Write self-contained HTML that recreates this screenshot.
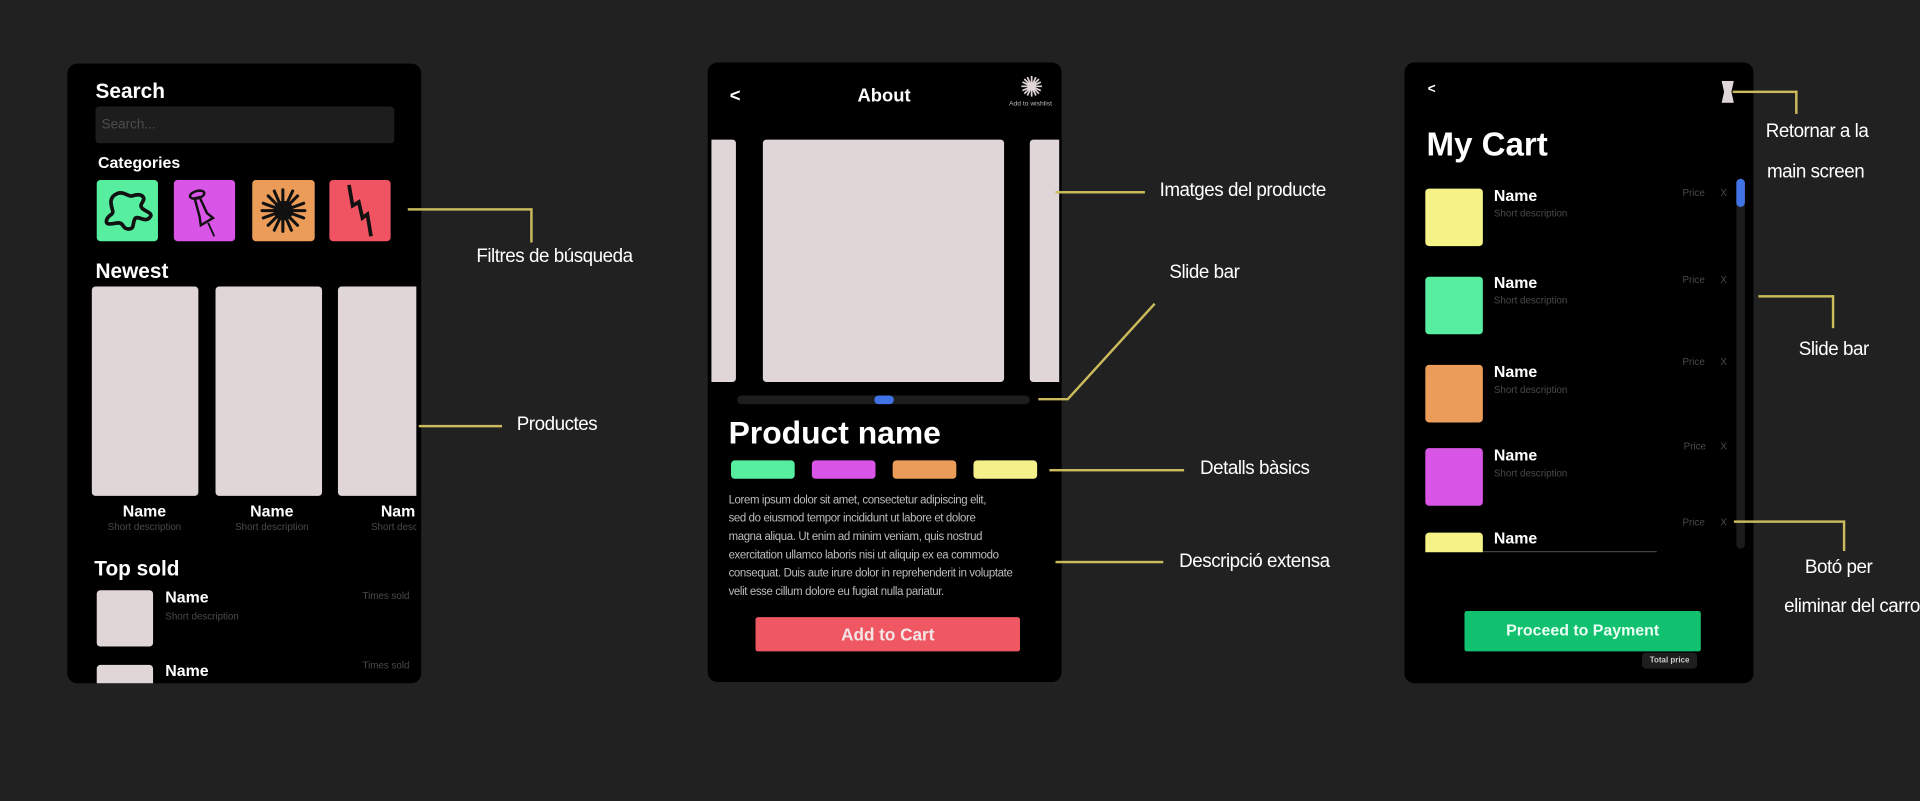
<!DOCTYPE html>
<html><head><meta charset="utf-8"><style>
html,body{margin:0;padding:0;background:#212121;width:1920px;height:800px;overflow:hidden}
#w{position:absolute;left:0;top:0;width:1568px;height:654px;transform:scale(1.22449);transform-origin:0 0;font-family:"Liberation Sans",Arial,sans-serif;color:#fff}
.a{position:absolute}
.ph{position:absolute;background:#000;border-radius:8px;overflow:hidden}
.b{font-weight:bold}
.g{color:#4a4a4a}
.card{background:#e0d6d7;border-radius:3px;position:absolute}
.ln{position:absolute;background:#cbbb5c}
.an{position:absolute;font-size:16px;letter-spacing:-0.4px;color:#fff;white-space:nowrap;transform:scaleX(0.96);transform-origin:0 0}
</style></head><body><div id="w">

<!-- Phone 1 -->
<div class="ph" style="left:55px;top:52px;width:289px;height:506px">
 <div class="a b" style="left:23px;top:13px;font-size:17px">Search</div>
 <div class="a" style="left:23px;top:35px;width:244px;height:30px;background:#1d1d1d;border-radius:3px"></div>
 <div class="a" style="left:28px;top:44px;font-size:11px;color:#4d4d4d">Search...</div>
 <div class="a b" style="left:25px;top:73px;font-size:13px">Categories</div>
 <div class="a" style="left:24px;top:95px;width:50px;height:50px;background:#57ee9f;border-radius:3px">
  <svg width="50" height="50" viewBox="0 0 50 50"><path d="M17 11c5-2 9 3 12 2s7-2 9 1-4 6-1 9 10 4 6 8-10-3-12 1 0 8-5 8-4-5-8-5-11 3-10-2 6-4 5-8-4-11 4-14z" fill="none" stroke="#111" stroke-width="3" stroke-linejoin="round"/></svg>
 </div>
 <div class="a" style="left:87px;top:95px;width:50px;height:50px;background:#d955e8;border-radius:3px">
  <svg width="50" height="50" viewBox="0 0 50 50"><ellipse cx="19" cy="12" rx="6" ry="3" fill="none" stroke="#111" stroke-width="2" transform="rotate(-15 19 12)"/><path d="M17 15l4-1 6 13 5 4-10 6-1-7z" fill="none" stroke="#111" stroke-width="2"/><path d="M28 35l5 11" stroke="#111" stroke-width="1.5"/></svg>
 </div>
 <div class="a" style="left:151px;top:95px;width:51px;height:50px;background:#eb9c59;border-radius:3px">
  <svg width="51" height="50" viewBox="0 0 51 50"><g stroke="#111" stroke-width="2.5" stroke-linecap="round"><path d="M25 8v34M8 25h35M13 13l24 24M37 13L13 37M18 9l14 32M33 9L18 41M9 19l33 12M9 31l33-12"/></g><circle cx="25.5" cy="25" r="8" fill="#111"/></svg>
 </div>
 <div class="a" style="left:214px;top:95px;width:50px;height:50px;background:#f05462;border-radius:3px">
  <svg width="50" height="50" viewBox="0 0 50 50"><path d="M16 4l3 17 5-3 3 13 4-3 3 18" fill="none" stroke="#111" stroke-width="3" stroke-linejoin="miter"/></svg>
 </div>
 <div class="a b" style="left:23px;top:160px;font-size:17px">Newest</div>
 <div class="card" style="left:20px;top:182px;width:87px;height:171px"></div>
 <div class="card" style="left:121px;top:182px;width:87px;height:171px"></div>
 <div class="card" style="left:221px;top:182px;width:64px;height:171px;border-radius:3px 0 0 3px"></div>
 <div class="a b" style="left:23px;top:358px;width:80px;text-align:center;font-size:13px">Name</div>
 <div class="a g" style="left:13px;top:374px;width:100px;text-align:center;font-size:8px">Short description</div>
 <div class="a b" style="left:127px;top:358px;width:80px;text-align:center;font-size:13px">Name</div>
 <div class="a g" style="left:117px;top:374px;width:100px;text-align:center;font-size:8px">Short description</div>
 <div class="a b" style="left:256px;top:358px;width:29px;overflow:hidden;font-size:13px">Nam</div>
 <div class="a g" style="left:248px;top:374px;font-size:8px;width:37px;overflow:hidden;white-space:nowrap">Short description</div>
 <div class="a b" style="left:22px;top:403px;font-size:17px">Top sold</div>
 <div class="card" style="left:24px;top:430px;width:46px;height:46px"></div>
 <div class="a b" style="left:80px;top:428px;font-size:13px">Name</div>
 <div class="a g" style="left:80px;top:447px;font-size:8px">Short description</div>
 <div class="a g" style="left:241px;top:430px;font-size:8px">Times sold</div>
 <div class="card" style="left:24px;top:491px;width:46px;height:30px"></div>
 <div class="a b" style="left:80px;top:488px;font-size:13px">Name</div>
 <div class="a g" style="left:241px;top:487px;font-size:8px">Times sold</div>
</div>

<!-- Phone 2 -->
<div class="ph" style="left:578px;top:51px;width:289px;height:506px">
 <div class="a b" style="left:18px;top:19px;font-size:15px">&lt;</div>
 <div class="a b" style="left:100px;top:19px;width:88px;text-align:center;font-size:15px">About</div>
 <svg class="a" style="left:256px;top:11px" width="17" height="17" viewBox="0 0 17 17"><g stroke="#e0d6d7" stroke-width="1.4"><path d="M8.5 0v17M0 8.5h17M2.5 2.5l12 12M14.5 2.5l-12 12M5 1l7 15M12 1L5 16M1 5l15 7M1 12l15-7"/></g><circle cx="8.5" cy="8.5" r="3" fill="#e0d6d7"/></svg>
 <div class="a" style="left:246px;top:31px;font-size:5.5px;color:#bbb">Add to wishlist</div>
 <div class="card" style="left:3px;top:63px;width:20px;height:198px;border-radius:0 3px 3px 0"></div>
 <div class="card" style="left:45px;top:63px;width:197px;height:198px"></div>
 <div class="card" style="left:263px;top:63px;width:24px;height:198px;border-radius:3px 0 0 3px"></div>
 <div class="a" style="left:24px;top:272px;width:239px;height:7px;background:#1d1d1d;border-radius:4px"></div>
 <div class="a" style="left:136px;top:272px;width:16px;height:7px;background:#3f73e6;border-radius:4px"></div>
 <div class="a b" style="left:17px;top:287px;font-size:26px">Product name</div>
 <div class="a" style="left:19px;top:325px;width:52px;height:15px;background:#57ee9f;border-radius:3px"></div>
 <div class="a" style="left:85px;top:325px;width:52px;height:15px;background:#d955e8;border-radius:3px"></div>
 <div class="a" style="left:151px;top:325px;width:52px;height:15px;background:#eb9c59;border-radius:3px"></div>
 <div class="a" style="left:217px;top:325px;width:52px;height:15px;background:#f5f08a;border-radius:3px"></div>
 <div class="a" style="left:17px;top:350px;width:290px;font-size:9.6px;letter-spacing:-0.3px;line-height:15px;color:#bdbdbd;transform:scaleX(0.97);transform-origin:0 0">Lorem ipsum dolor sit amet, consectetur adipiscing elit,<br>sed do eiusmod tempor incididunt ut labore et dolore<br>magna aliqua. Ut enim ad minim veniam, quis nostrud<br>exercitation ullamco laboris nisi ut aliquip ex ea commodo<br>consequat. Duis aute irure dolor in reprehenderit in voluptate<br>velit esse cillum dolore eu fugiat nulla pariatur.</div>
 <div class="a b" style="left:39px;top:453px;width:216px;height:28px;background:#ef5763;border-radius:2px;text-align:center;line-height:28px;font-size:14px;color:#f4e6e6">Add to Cart</div>
</div>

<!-- Phone 3 -->
<div class="ph" style="left:1147px;top:51px;width:285px;height:507px">
 <div class="a b" style="left:19px;top:16px;font-size:11px">&lt;</div>
 <svg class="a" style="left:259px;top:15px" width="10" height="18" viewBox="0 0 10 18"><path d="M0 0h10l-2 9 2 9H0l2-9z" fill="#e0d6d7"/></svg>
 <div class="a b" style="left:18px;top:52px;font-size:27px">My Cart</div>
 <div class="a" style="left:17px;top:103px;width:47px;height:47px;background:#f5f387;border-radius:3px"></div>
 <div class="a" style="left:17px;top:175px;width:47px;height:47px;background:#57ee9f;border-radius:3px"></div>
 <div class="a" style="left:17px;top:247px;width:47px;height:47px;background:#eb9c59;border-radius:3px"></div>
 <div class="a" style="left:17px;top:315px;width:47px;height:47px;background:#d955e8;border-radius:3px"></div>
 <div class="a" style="left:17px;top:384px;width:47px;height:16px;background:#f5f387;border-radius:3px 3px 0 0"></div>
 <div class="a" style="left:64px;top:399px;width:142px;height:1px;background:#444"></div>
 <div class="a b" style="left:73px;top:101px;font-size:13px">Name</div>
 <div class="a g" style="left:73px;top:119px;font-size:8px">Short description</div>
 <div class="a b" style="left:73px;top:172px;font-size:13px">Name</div>
 <div class="a g" style="left:73px;top:190px;font-size:8px">Short description</div>
 <div class="a b" style="left:73px;top:245px;font-size:13px">Name</div>
 <div class="a g" style="left:73px;top:263px;font-size:8px">Short description</div>
 <div class="a b" style="left:73px;top:313px;font-size:13px">Name</div>
 <div class="a g" style="left:73px;top:331px;font-size:8px">Short description</div>
 <div class="a b" style="left:73px;top:381px;font-size:13px">Name</div>
 <div class="a g" style="left:227px;top:102px;font-size:8px">Price</div><div class="a g" style="left:258px;top:102px;font-size:8px">X</div>
 <div class="a g" style="left:227px;top:173px;font-size:8px">Price</div><div class="a g" style="left:258px;top:173px;font-size:8px">X</div>
 <div class="a g" style="left:227px;top:240px;font-size:8px">Price</div><div class="a g" style="left:258px;top:240px;font-size:8px">X</div>
 <div class="a g" style="left:228px;top:309px;font-size:8px">Price</div><div class="a g" style="left:258px;top:309px;font-size:8px">X</div>
 <div class="a g" style="left:227px;top:371px;font-size:8px">Price</div><div class="a g" style="left:258px;top:371px;font-size:8px">X</div>
 <div class="a" style="left:271px;top:95px;width:7px;height:302px;background:#1c1c1c;border-radius:4px"></div>
 <div class="a" style="left:271px;top:95px;width:7px;height:23px;background:#3f73e6;border-radius:4px"></div>
 <div class="a b" style="left:49px;top:448px;width:193px;height:33px;background:#12c16f;border-radius:2px;text-align:center;line-height:32px;font-size:13px;color:#eafff3">Proceed to Payment</div>
 <div class="a b" style="left:194px;top:482px;width:45px;height:13px;background:#1e1e1e;border-radius:3px;text-align:center;line-height:13px;font-size:6.5px;color:#ccc">Total price</div>
</div>

<!-- annotations -->
<div class="ln" style="left:333px;top:170px;width:101px;height:2px"></div>
<div class="ln" style="left:433px;top:170px;width:2px;height:28px"></div>
<div class="an" style="left:389px;top:201px">Filtres de búsqueda</div>
<div class="ln" style="left:342px;top:347px;width:68px;height:2px"></div>
<div class="an" style="left:422px;top:338px">Productes</div>

<div class="ln" style="left:862px;top:156px;width:73px;height:2px"></div>
<div class="an" style="left:947px;top:147px">Imatges del producte</div>
<svg class="a" style="left:840px;top:220px" width="110" height="110"><path d="M8 106h24l71-78" fill="none" stroke="#cbbb5c" stroke-width="2"/></svg>
<div class="an" style="left:955px;top:214px">Slide bar</div>
<div class="ln" style="left:857px;top:383px;width:110px;height:2px"></div>
<div class="an" style="left:980px;top:374px">Detalls bàsics</div>
<div class="ln" style="left:862px;top:458px;width:88px;height:2px"></div>
<div class="an" style="left:963px;top:450px">Descripció extensa</div>

<div class="ln" style="left:1415px;top:74px;width:53px;height:2px"></div>
<div class="ln" style="left:1466px;top:74px;width:2px;height:19px"></div>
<div class="an" style="left:1442px;top:99px">Retornar a la</div>
<div class="an" style="left:1443px;top:132px">main screen</div>
<div class="ln" style="left:1436px;top:241px;width:61px;height:2px"></div>
<div class="ln" style="left:1496px;top:241px;width:2px;height:27px"></div>
<div class="an" style="left:1469px;top:277px">Slide bar</div>
<div class="ln" style="left:1416px;top:425px;width:90px;height:2px"></div>
<div class="ln" style="left:1505px;top:425px;width:2px;height:25px"></div>
<div class="an" style="left:1474px;top:455px">Botó per</div>
<div class="an" style="left:1457px;top:487px">eliminar del carro</div>

</div></body></html>
